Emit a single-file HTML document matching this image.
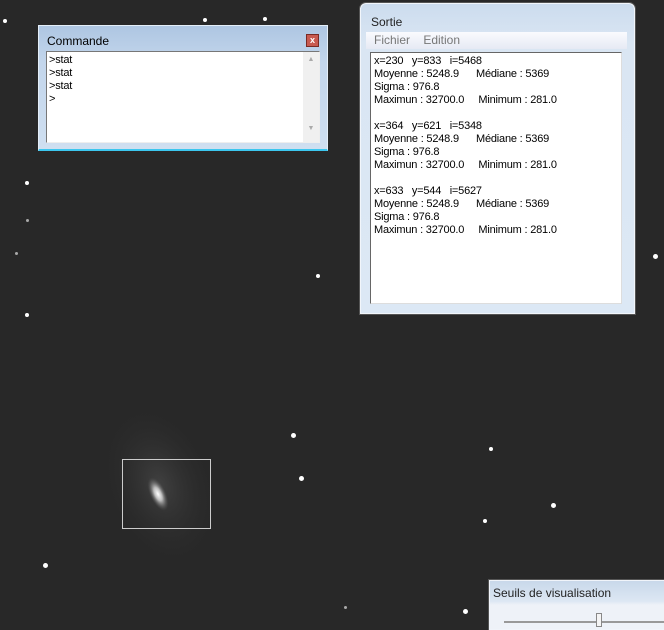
<!DOCTYPE html>
<html><head><meta charset="utf-8"><style>
*{margin:0;padding:0;box-sizing:border-box}
body{width:664px;height:625px;background:#282828;position:relative;overflow:hidden;font-family:"Liberation Sans",sans-serif}
.s{position:absolute;border-radius:50%;background:#fff}
.win{position:absolute}
.txt{font-size:11px;line-height:13px;color:#000;letter-spacing:-0.2px;white-space:pre}
</style></head><body>
<svg width="664" height="625" style="position:absolute;left:0;top:0">
<defs><radialGradient id="g" cx="50%" cy="50%" r="50%"><stop offset="0" stop-color="#666"/><stop offset="1" stop-color="#2a2a2a" stop-opacity="0"/></radialGradient>
<radialGradient id="c" cx="50%" cy="50%" r="50%"><stop offset="0" stop-color="#fff"/><stop offset="0.4" stop-color="#bbb"/><stop offset="1" stop-color="#555" stop-opacity="0"/></radialGradient></defs>
<ellipse cx="160" cy="485" rx="55" ry="85" fill="url(#g)" transform="rotate(-20 160 485)" opacity="0.4"/>
<ellipse cx="158" cy="494" rx="8" ry="18" fill="url(#c)" transform="rotate(-25 158 494)"/>
<rect x="122.5" y="459.5" width="88" height="69" fill="none" stroke="#ccc" stroke-width="1"/>
</svg>
<div class="s" style="left:3px;top:19px;width:4px;height:4px"></div>
<div class="s" style="left:203px;top:18px;width:4px;height:4px"></div>
<div class="s" style="left:263px;top:17px;width:4px;height:4px"></div>
<div class="s" style="left:25px;top:181px;width:4px;height:4px"></div>
<div class="s" style="left:26px;top:219px;width:3px;height:3px;opacity:.6"></div>
<div class="s" style="left:15px;top:252px;width:3px;height:3px;opacity:.6"></div>
<div class="s" style="left:316px;top:274px;width:4px;height:4px"></div>
<div class="s" style="left:25px;top:313px;width:4px;height:4px"></div>
<div class="s" style="left:291px;top:433px;width:5px;height:5px"></div>
<div class="s" style="left:299px;top:476px;width:5px;height:5px"></div>
<div class="s" style="left:489px;top:447px;width:4px;height:4px"></div>
<div class="s" style="left:551px;top:503px;width:5px;height:5px"></div>
<div class="s" style="left:483px;top:519px;width:4px;height:4px"></div>
<div class="s" style="left:43px;top:563px;width:5px;height:5px"></div>
<div class="s" style="left:463px;top:609px;width:5px;height:5px"></div>
<div class="s" style="left:653px;top:254px;width:5px;height:5px"></div>
<div class="s" style="left:344px;top:606px;width:3px;height:3px;opacity:.6"></div>

<!-- Commande -->
<div class="win" style="left:38px;top:25px;width:290px;height:126px;background:linear-gradient(#aec6e2,#c3d6ec 30%,#cfdff0);border:1px solid #e4eef8;border-bottom:2px solid #3cc6ee">
 <div style="position:absolute;left:8px;top:8px;font-size:12px;color:#000">Commande</div>
 <div style="position:absolute;left:267px;top:8px;width:13px;height:13px;background:#c85a50;border:1px solid #7a2a24;color:#fff;font-size:9px;line-height:11px;text-align:center;font-weight:bold">x</div>
 <div style="position:absolute;left:7px;top:25px;width:274px;height:92px;background:#fff;border:1px solid #777;border-right-color:#eee;border-bottom-color:#eee">
  <div class="txt" style="position:absolute;left:2px;top:2px">&gt;stat
&gt;stat
&gt;stat
&gt;</div>
  <div style="position:absolute;right:0;top:0;width:16px;height:90px;background:#f0f0f0;color:#aaa;font-size:7px;text-align:center"><div style="margin-top:4px">▲</div><div style="margin-top:62px">▼</div></div>
 </div>
</div>

<!-- Sortie -->
<div class="win" style="left:360px;top:3px;width:275px;height:311px;background:linear-gradient(#ccdcee,#dae6f3 40px,#dce8f5);border:1px solid #f2f6fb;border-radius:6px 6px 0 0;box-shadow:0 0 0 1px #555">
 <div style="position:absolute;left:10px;top:11px;font-size:12px;color:#222">Sortie</div>
 <div style="position:absolute;left:5px;top:28px;width:261px;height:17px;background:linear-gradient(#fafbfe,#e6eaf4);font-size:12px;color:#777;padding-left:8px;line-height:17px">Fichier&nbsp;&nbsp;&nbsp;&nbsp;Edition</div>
 <div style="position:absolute;left:9px;top:48px;width:252px;height:252px;background:#fff;border:1px solid #666;border-right-color:#ddd;border-bottom-color:#ddd">
  <div class="txt" style="position:absolute;left:3px;top:2px">x=230   y=833   i=5468
Moyenne : 5248.9      Médiane : 5369
Sigma : 976.8
Maximun : 32700.0     Minimum : 281.0

x=364   y=621   i=5348
Moyenne : 5248.9      Médiane : 5369
Sigma : 976.8
Maximun : 32700.0     Minimum : 281.0

x=633   y=544   i=5627
Moyenne : 5248.9      Médiane : 5369
Sigma : 976.8
Maximun : 32700.0     Minimum : 281.0</div>
 </div>
</div>

<!-- Seuils -->
<div class="win" style="left:489px;top:580px;width:180px;height:50px;background:linear-gradient(#c8d8ea,#dce7f3 20px,#eef2f8 24px);border:1px solid #f0f4fa;box-shadow:0 0 0 1px #555">
 <div style="position:absolute;left:3px;top:5px;font-size:12px;color:#222">Seuils de visualisation</div>
 <div style="position:absolute;left:14px;top:40px;width:170px;height:2px;background:#999"></div>
 <div style="position:absolute;left:106px;top:32px;width:6px;height:14px;background:#f4f4f4;border:1px solid #888"></div>
</div>
</body></html>
